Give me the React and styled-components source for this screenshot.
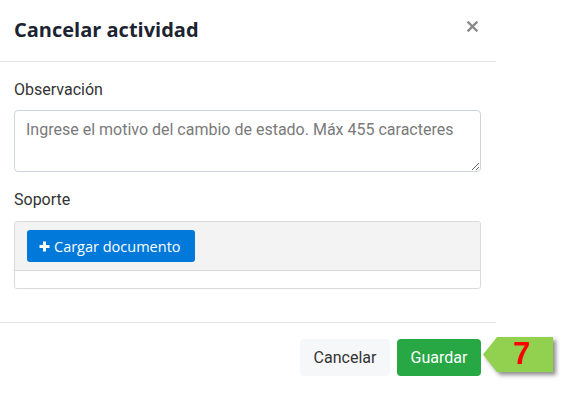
import React from "react";
import styled, { createGlobalStyle } from "styled-components";

const Global = createGlobalStyle`
  html, body { margin: 0; padding: 0; background: #fff; }
  * { box-sizing: border-box; }
`;

const Page = styled.div`
  position: relative;
  width: 564px;
  height: 403px;
  background: #fff;
  overflow: hidden;
`;

const Modal = styled.div`
  width: 496px;
  background: #fff;
  display: flex;
  flex-direction: column;
`;

const Header = styled.div`
  height: 62px;
  padding: 0 16px 2px 14px;
  display: flex;
  align-items: center;
  justify-content: space-between;
  border-bottom: 1px solid #e4e4e4;
`;

const Title = styled.h2`
  margin: 0;
  font-family: "Open Sans", sans-serif;
  font-weight: 700;
  font-size: 20px;
  color: #1b2330;
`;

const Close = styled.button`
  border: 0;
  background: none;
  padding: 0;
  margin-top: -6px;
  width: 16px;
  height: 16px;
  display: flex;
  align-items: center;
  justify-content: center;
  cursor: pointer;
`;

const Body = styled.div`
  padding: 18px 15px 33px 14px;
  display: flex;
  flex-direction: column;
`;

const Label = styled.label`
  font-family: Roboto, sans-serif;
  font-size: 16px;
  line-height: 20px;
  color: #333;
  margin-bottom: ${(p) => p.$gap}px;
`;

const TextArea = styled.textarea`
  width: 467px;
  height: 62px;
  border: 1px solid #ced4da;
  border-radius: 4px;
  padding: 8px 11px;
  font-family: Roboto, sans-serif;
  font-size: 16px;
  line-height: 22px;
  color: #333;
  resize: vertical;
  margin: 0 0 18px 0;
  display: block;
  &::placeholder { color: #7a7a7a; }
`;

const UploadBox = styled.div`
  width: 467px;
  border: 1px solid #dadada;
  border-radius: 3px;
  overflow: hidden;
`;

const UploadBar = styled.div`
  background: #f3f3f3;
  padding: 8px 12px;
  border-bottom: 1px solid #dadada;
`;

const UploadList = styled.div`
  height: 17px;
  background: #fff;
`;

const UploadButton = styled.button`
  height: 32px;
  width: 168px;
  border: 0;
  border-radius: 3px;
  background: #0079db;
  color: #fff;
  font-family: "Open Sans", sans-serif;
  font-size: 14.5px;
  display: flex;
  align-items: center;
  padding: 0 0 0 12px;
  gap: 4px;
  cursor: pointer;
`;

const Footer = styled.div`
  border-top: 1px solid #e4e4e4;
  padding: 16px 15px 0 0;
  display: flex;
  justify-content: flex-end;
  gap: 7px;
`;

const Btn = styled.button`
  height: 37px;
  width: ${(p) => p.$w}px;
  border: 0;
  border-radius: 4px;
  font-family: Roboto, sans-serif;
  font-size: 16px;
  font-weight: 400;
  background: ${(p) => (p.$primary ? "#28a745" : "#f6f7f9")};
  color: ${(p) => (p.$primary ? "#fff" : "#333")};
  cursor: pointer;
`;

const Callout = styled.div`
  position: absolute;
  left: 483px;
  top: 337px;
  width: 70px;
  height: 35px;
  filter: drop-shadow(3px 3px 2px rgba(0, 0, 0, 0.45));
`;

const CalloutShape = styled.div`
  position: absolute;
  inset: 0;
  background: #92d050;
  clip-path: polygon(0 50%, 20% 0, 100% 0, 100% 100%, 20% 100%);
`;

const CalloutNum = styled.span`
  position: absolute;
  left: 30px;
  top: -2px;
  font-family: "Liberation Sans", Arial, sans-serif;
  font-weight: 700;
  font-size: 31px;
  line-height: 38px;
  color: #ff0000;
`;

export default function App() {
  return (
    <Page>
      <Global />
      <Modal>
        <Header>
          <Title>Cancelar actividad</Title>
          <Close aria-label="Cerrar">
            <svg width="11" height="11" viewBox="0 0 11 11">
              <path d="M1.5 1.5 L9.5 9.5 M9.5 1.5 L1.5 9.5" stroke="#8a8a8a" strokeWidth="2.4" strokeLinecap="square" />
            </svg>
          </Close>
        </Header>
        <Body>
          <Label $gap={10}>Observación</Label>
          <TextArea placeholder="Ingrese el motivo del cambio de estado. Máx 455 caracteres" />
          <Label $gap={11}>Soporte</Label>
          <UploadBox>
            <UploadBar>
              <UploadButton>
                <svg width="11" height="11" viewBox="0 0 11 11">
                  <path d="M5.5 0.5 V10.5 M0.5 5.5 H10.5" stroke="#fff" strokeWidth="3" />
                </svg>
                Cargar documento
              </UploadButton>
            </UploadBar>
            <UploadList />
          </UploadBox>
        </Body>
        <Footer>
          <Btn $w={90}>Cancelar</Btn>
          <Btn $w={84} $primary>Guardar</Btn>
        </Footer>
      </Modal>
      <Callout>
        <CalloutShape />
        <CalloutNum>7</CalloutNum>
      </Callout>
    </Page>
  );
}
